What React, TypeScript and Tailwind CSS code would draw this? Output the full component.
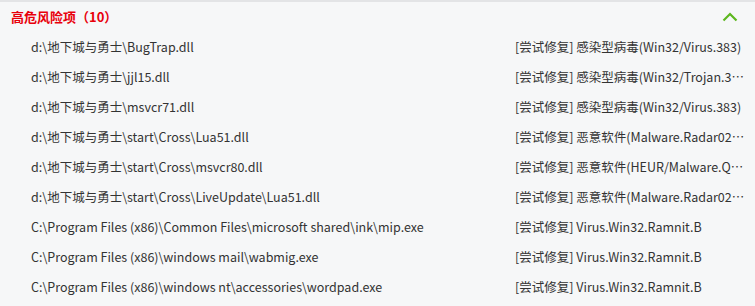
import React from "react";

const rows: [string, string][] = [
  ["d:\\地下城与勇士\\BugTrap.dll", "[尝试修复] 感染型病毒(Win32/Virus.383)"],
  ["d:\\地下城与勇士\\jjl15.dll", "[尝试修复] 感染型病毒(Win32/Trojan.3c4a5b6d7e)"],
  ["d:\\地下城与勇士\\msvcr71.dll", "[尝试修复] 感染型病毒(Win32/Virus.383)"],
  ["d:\\地下城与勇士\\start\\Cross\\Lua51.dll", "[尝试修复] 恶意软件(Malware.Radar02.Gen)"],
  ["d:\\地下城与勇士\\start\\Cross\\msvcr80.dll", "[尝试修复] 恶意软件(HEUR/Malware.QVM06.Gen)"],
  ["d:\\地下城与勇士\\start\\Cross\\LiveUpdate\\Lua51.dll", "[尝试修复] 恶意软件(Malware.Radar02.Gen)"],
  ["C:\\Program Files (x86)\\Common Files\\microsoft shared\\ink\\mip.exe", "[尝试修复] Virus.Win32.Ramnit.B"],
  ["C:\\Program Files (x86)\\windows mail\\wabmig.exe", "[尝试修复] Virus.Win32.Ramnit.B"],
  ["C:\\Program Files (x86)\\windows nt\\accessories\\wordpad.exe", "[尝试修复] Virus.Win32.Ramnit.B"],
];

export default function App() {
  return (
    <div
      className="w-[755px] h-[306px] bg-[#f6f7f8] border-t-2 border-[#e3e4e6] overflow-hidden"
      style={{ fontFamily: '"Microsoft YaHei", "Noto Sans CJK SC", "Noto Sans", sans-serif' }}
    >
      <div className="h-[30px] flex items-center justify-between pl-[11px] pr-[17px]">
        <span className="text-[13px] font-bold text-[#e8000b]">高危风险项（10）</span>
        <svg width="16" height="10" viewBox="0 0 16 10">
          <path d="M1.5 8.5 L8 2 L14.5 8.5" fill="none" stroke="#5db71f" strokeWidth="2.2" />
        </svg>
      </div>
      {rows.map(([p, r], i) => (
        <div key={i} className="h-[30px] flex items-center text-[12.5px] text-[#333333]">
          <div className="w-[515px] pl-[31px] whitespace-nowrap overflow-hidden">{p}</div>
          <div className="w-[232px] whitespace-nowrap overflow-hidden text-ellipsis">{r}</div>
        </div>
      ))}
    </div>
  );
}
